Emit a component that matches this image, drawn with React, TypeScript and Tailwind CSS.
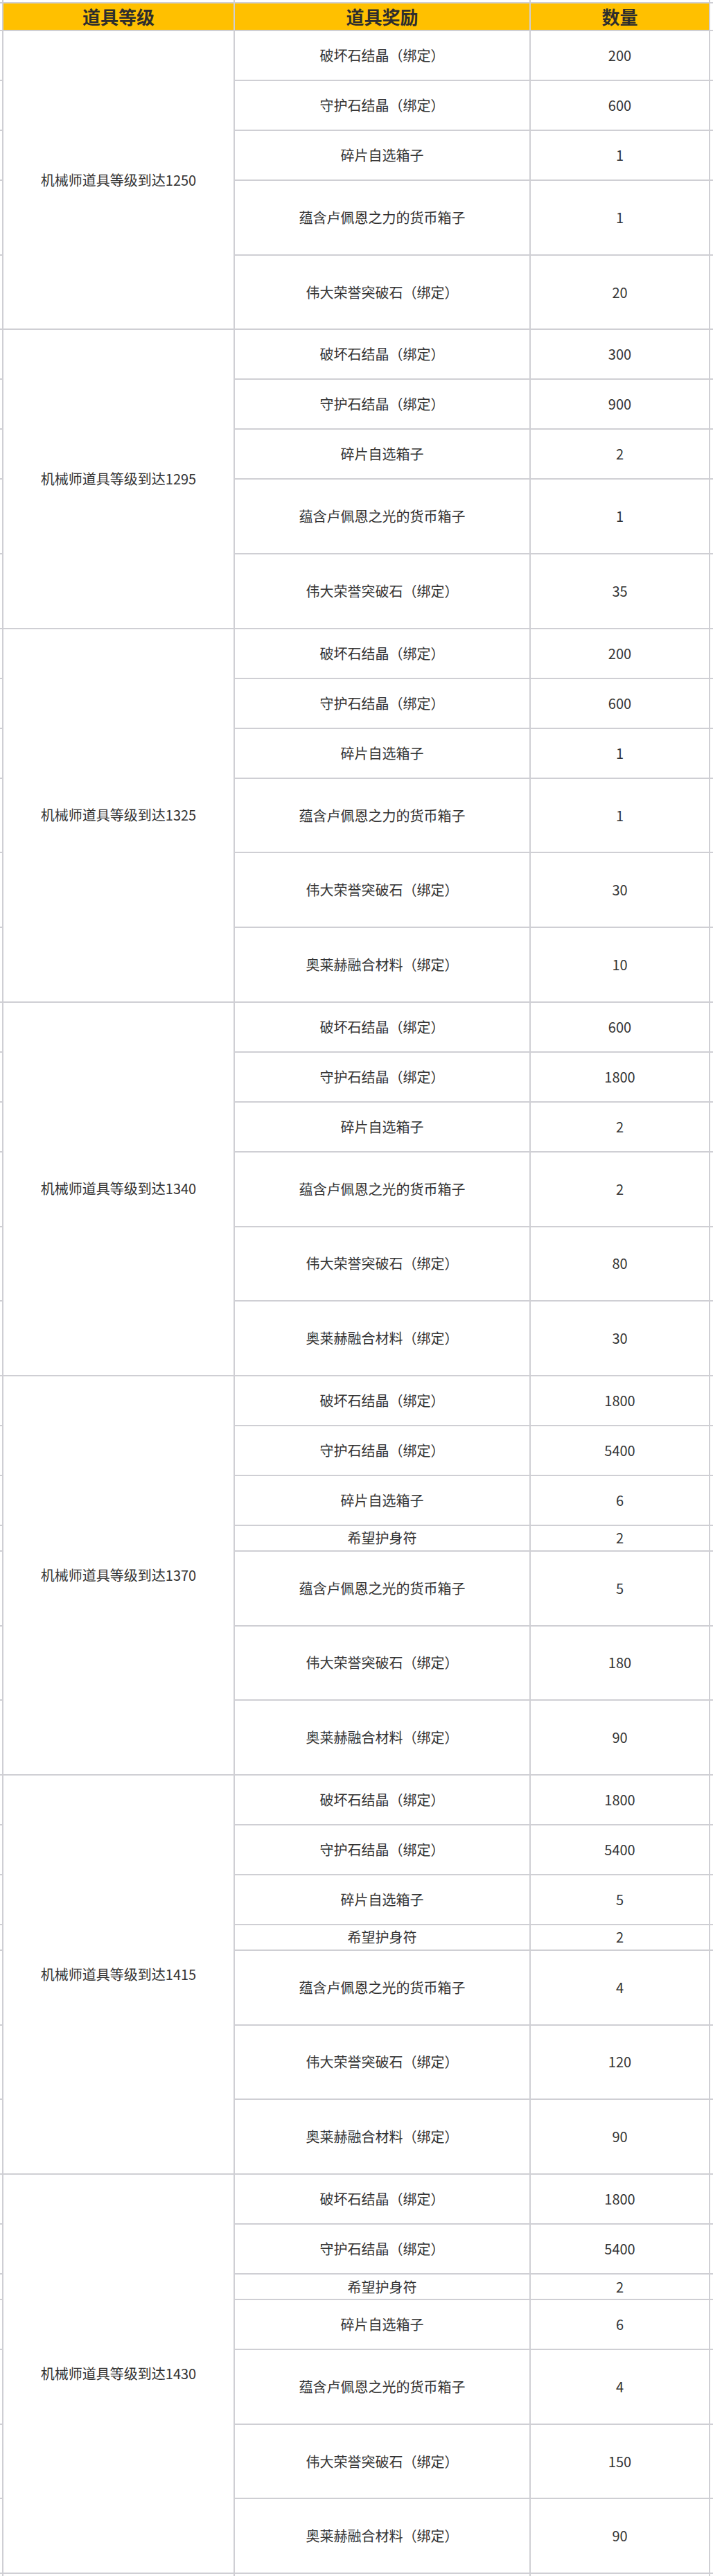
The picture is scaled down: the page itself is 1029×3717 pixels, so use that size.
import React from "react";

type Size = "n" | "s" | "t";
type Item = { name: string; qty: string; size: Size };
type Group = { level: string; items: Item[] };

const groups: Group[] = [
  {
    level: "机械师道具等级到达1250",
    items: [
      { name: "破坏石结晶（绑定）", qty: "200", size: "n" },
      { name: "守护石结晶（绑定）", qty: "600", size: "n" },
      { name: "碎片自选箱子", qty: "1", size: "n" },
      { name: "蕴含卢佩恩之力的货币箱子", qty: "1", size: "t" },
      { name: "伟大荣誉突破石（绑定）", qty: "20", size: "t" },
    ],
  },
  {
    level: "机械师道具等级到达1295",
    items: [
      { name: "破坏石结晶（绑定）", qty: "300", size: "n" },
      { name: "守护石结晶（绑定）", qty: "900", size: "n" },
      { name: "碎片自选箱子", qty: "2", size: "n" },
      { name: "蕴含卢佩恩之光的货币箱子", qty: "1", size: "t" },
      { name: "伟大荣誉突破石（绑定）", qty: "35", size: "t" },
    ],
  },
  {
    level: "机械师道具等级到达1325",
    items: [
      { name: "破坏石结晶（绑定）", qty: "200", size: "n" },
      { name: "守护石结晶（绑定）", qty: "600", size: "n" },
      { name: "碎片自选箱子", qty: "1", size: "n" },
      { name: "蕴含卢佩恩之力的货币箱子", qty: "1", size: "t" },
      { name: "伟大荣誉突破石（绑定）", qty: "30", size: "t" },
      { name: "奥莱赫融合材料（绑定）", qty: "10", size: "t" },
    ],
  },
  {
    level: "机械师道具等级到达1340",
    items: [
      { name: "破坏石结晶（绑定）", qty: "600", size: "n" },
      { name: "守护石结晶（绑定）", qty: "1800", size: "n" },
      { name: "碎片自选箱子", qty: "2", size: "n" },
      { name: "蕴含卢佩恩之光的货币箱子", qty: "2", size: "t" },
      { name: "伟大荣誉突破石（绑定）", qty: "80", size: "t" },
      { name: "奥莱赫融合材料（绑定）", qty: "30", size: "t" },
    ],
  },
  {
    level: "机械师道具等级到达1370",
    items: [
      { name: "破坏石结晶（绑定）", qty: "1800", size: "n" },
      { name: "守护石结晶（绑定）", qty: "5400", size: "n" },
      { name: "碎片自选箱子", qty: "6", size: "n" },
      { name: "希望护身符", qty: "2", size: "s" },
      { name: "蕴含卢佩恩之光的货币箱子", qty: "5", size: "t" },
      { name: "伟大荣誉突破石（绑定）", qty: "180", size: "t" },
      { name: "奥莱赫融合材料（绑定）", qty: "90", size: "t" },
    ],
  },
  {
    level: "机械师道具等级到达1415",
    items: [
      { name: "破坏石结晶（绑定）", qty: "1800", size: "n" },
      { name: "守护石结晶（绑定）", qty: "5400", size: "n" },
      { name: "碎片自选箱子", qty: "5", size: "n" },
      { name: "希望护身符", qty: "2", size: "s" },
      { name: "蕴含卢佩恩之光的货币箱子", qty: "4", size: "t" },
      { name: "伟大荣誉突破石（绑定）", qty: "120", size: "t" },
      { name: "奥莱赫融合材料（绑定）", qty: "90", size: "t" },
    ],
  },
  {
    level: "机械师道具等级到达1430",
    items: [
      { name: "破坏石结晶（绑定）", qty: "1800", size: "n" },
      { name: "守护石结晶（绑定）", qty: "5400", size: "n" },
      { name: "希望护身符", qty: "2", size: "s" },
      { name: "碎片自选箱子", qty: "6", size: "n" },
      { name: "蕴含卢佩恩之光的货币箱子", qty: "4", size: "t" },
      { name: "伟大荣誉突破石（绑定）", qty: "150", size: "t" },
      { name: "奥莱赫融合材料（绑定）", qty: "90", size: "t" },
    ],
  },
];

const heights: Record<Size, string> = {
  n: "h-[70px]",
  s: "h-[35px]",
  t: "h-[105.7px]",
};

const spans: Record<number, string> = {
  5: "row-span-5",
  6: "row-span-6",
  7: "row-span-7",
};

const cell = "bg-white flex items-center justify-center text-center";

export default function App() {
  return (
    <div
      className="w-[1029px] h-[3717px] bg-white overflow-hidden text-[#333333] text-[20px] leading-none"
      style={{ fontFamily: '"Noto Sans CJK SC", "Noto Sans", sans-serif' }}
    >
      <div className="grid grid-cols-[3px_332px_425px_257px_4px] gap-[2px] bg-[#cfcfd4]">
        {/* top strip */}
        <div className="bg-white h-[3px]" />
        <div className="bg-white h-[3px]" />
        <div className="bg-white h-[3px]" />
        <div className="bg-white h-[3px]" />
        <div className="bg-white h-[3px]" />

        {/* header */}
        <div className="bg-white h-[38px]" />
        <div className="bg-[#ffc000] h-[38px] flex items-center justify-center text-[26px] font-bold text-[#2d2d2d]">
          道具等级
        </div>
        <div className="bg-[#ffc000] h-[38px] flex items-center justify-center text-[26px] font-bold text-[#2d2d2d]">
          道具奖励
        </div>
        <div className="bg-[#ffc000] h-[38px] flex items-center justify-center text-[26px] font-bold text-[#2d2d2d]">
          数量
        </div>
        <div className="bg-white h-[38px]" />

        {groups.map((g) =>
          g.items.map((it, i) => (
            <React.Fragment key={g.level + i}>
              <div className={`bg-white ${heights[it.size]}`} />
              {i === 0 && (
                <div className={`${cell} ${spans[g.items.length]}`}>{g.level}</div>
              )}
              <div className={`${cell} ${heights[it.size]}`}>{it.name}</div>
              <div className={`${cell} ${heights[it.size]}`}>{it.qty}</div>
              <div className={`bg-white ${heights[it.size]}`} />
            </React.Fragment>
          ))
        )}

        {/* bottom strip */}
        <div className="bg-white h-[3px]" />
        <div className="bg-white h-[3px]" />
        <div className="bg-white h-[3px]" />
        <div className="bg-white h-[3px]" />
        <div className="bg-white h-[3px]" />
      </div>
    </div>
  );
}
